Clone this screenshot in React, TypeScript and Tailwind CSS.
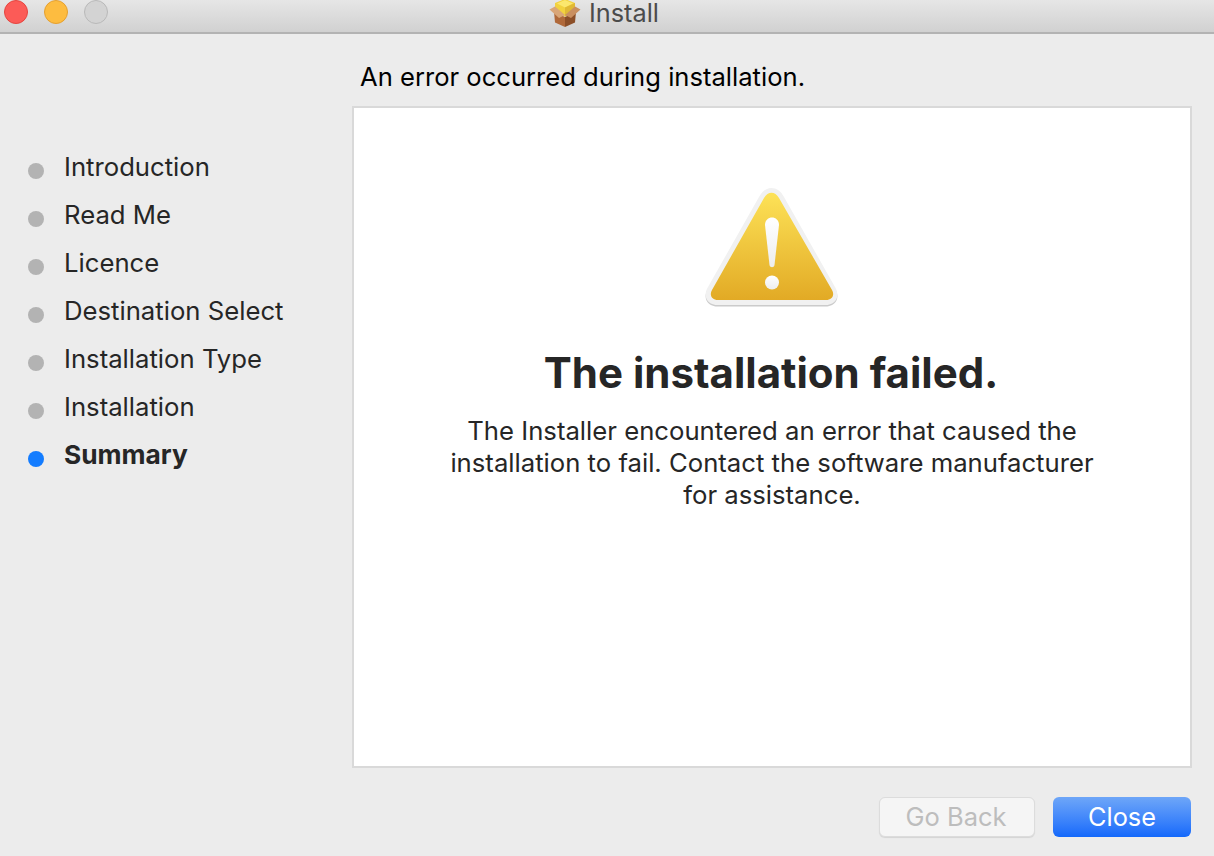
import React from "react";

const steps = ["Introduction", "Read Me", "Licence", "Destination Select", "Installation Type", "Installation", "Summary"];

function PackageIcon() {
  return (
    <svg width="32" height="27" viewBox="0 0 32 27" className="shrink-0">
      <path d="M5 12 L16 17 L16 27 L6 22.5 Z" fill="#b0693a" />
      <path d="M27 12 L16 17 L16 27 L26 22.5 Z" fill="#8c4f28" />
      <path d="M6 3 L16 -1 L26 3 L26 12 L16 16.5 L6 12 Z" fill="#f2d23f" />
      <path d="M8 3.5 L16 0 L24 3.5 L16 7.5 Z" fill="#fbe76e" />
      <path d="M16 7.5 L26 3 L26 12 L16 16.5 Z" fill="#e0b935" />
      <path d="M0.5 9.5 L6 6.5 L16 15 L10 18 Z" fill="#d9a678" />
      <path d="M31.5 9.5 L26 6.5 L16 15 L22 18 Z" fill="#c98f60" />
    </svg>
  );
}

function WarningIcon() {
  const rim = "M54 9 C60 -3 73 -3 79 9 L130 99 C136 109 130 117 120 117 L13 117 C3 117 -3 109 3 99 Z";
  return (
    <svg width="134" height="120" viewBox="0 0 134 120" className="block">
      <defs>
        <linearGradient id="warnFill" x1="0" y1="0" x2="0" y2="1">
          <stop offset="0" stopColor="#fde257" />
          <stop offset="1" stopColor="#e2aa25" />
        </linearGradient>
        <linearGradient id="warnBang" x1="0" y1="0" x2="0" y2="1">
          <stop offset="0" stopColor="#ffffff" />
          <stop offset="1" stopColor="#ededed" />
        </linearGradient>
      </defs>
      <path d={rim} fill="#a8a8a8" opacity="0.6" transform="translate(0 1.5)" />
      <path d={rim} fill="#f1f1f1" />
      <path
        d="M59 10 C63 3 70 3 74 10 L127 102 C130 107 127 112 121 112 L13 112 C7 112 4 107 7 102 Z"
        fill="url(#warnFill)"
      />
      <path
        d="M60 37 C60 27 74 27 74 37 L69.5 77 C69 80 65 80 64.5 77 Z"
        fill="url(#warnBang)"
      />
      <circle cx="67" cy="94.5" r="7" fill="url(#warnBang)" />
    </svg>
  );
}

export default function App() {
  return (
    <div className="w-[1214px] h-[856px] overflow-hidden flex flex-col bg-[#ececec] font-['Inter','Liberation_Sans',sans-serif] text-[#262626]">
      <header className="h-[34px] shrink-0 relative flex items-center justify-center border-b-2 border-[#b3b3b3] bg-gradient-to-b from-[#e6e6e6] to-[#d1d1d1]">
        <div className="absolute left-[4px] top-0 flex gap-[16px]">
          <span className="w-[24px] h-[24px] rounded-full bg-[#fc5b57] border border-[#e5453f]" />
          <span className="w-[24px] h-[24px] rounded-full bg-[#fdbc40] border border-[#e5a030]" />
          <span className="w-[24px] h-[24px] rounded-full bg-[#d3d3d3] border border-[#b9b9b9]" />
        </div>
        <div className="flex items-center gap-[8px] -mt-[5px] -ml-[6px]">
          <PackageIcon />
          <span className="text-[25.3px] leading-[25px] -mt-[3px] text-[#4b4b4b]">Install</span>
        </div>
      </header>

      <main className="flex-1 flex min-h-0">
        <nav className="w-[352px] shrink-0 pt-[109px] pl-[28px]">
          <ul className="flex flex-col">
            {steps.map((s, i) => {
              const active = i === steps.length - 1;
              return (
                <li key={s} className="h-[48px] flex items-center gap-[20px]">
                  <span className={`w-[16px] h-[16px] rounded-full mt-[7px] ${active ? "bg-[#137cff]" : "bg-[#b3b3b3]"}`} />
                  <span className={`leading-[30px] ${active ? "font-bold text-[26.3px]" : "text-[25.7px]"}`}>{s}</span>
                </li>
              );
            })}
          </ul>
        </nav>

        <section className="flex-1 pr-[22px] flex flex-col">
          <h2 className="h-[72px] pt-[26px] pl-[8px] text-[25.6px] leading-[34px] text-black font-normal">An error occurred during installation.</h2>
          <div className="h-[662px] bg-white border-2 border-[#d9d9d9] flex flex-col items-center pt-[80px]">
            <WarningIcon />
            <h1 className="mt-[37px] -ml-[2px] text-[42px] leading-[56px] font-bold text-[#262626]">The installation failed.</h1>
            <p className="mt-[14px] w-[660px] text-center text-[25.7px] leading-[32px]">
              The Installer encountered an error that caused the installation to fail. Contact the software manufacturer for assistance.
            </p>
          </div>
          <div className="flex justify-end gap-[18px] mt-[29px] pr-[1px]">
            <button className="w-[156px] h-[40px] rounded-[6px] bg-[#f5f5f5] border border-[#dcdcdc] shadow-[0_1px_1px_rgba(0,0,0,0.1)] text-[25.5px] pr-[2px] text-[#bdbdbd]">Go Back</button>
            <button className="w-[138px] h-[40px] rounded-[6px] bg-gradient-to-b from-[#6ea6f8] to-[#1268fb] text-[25.3px] text-white">Close</button>
          </div>
        </section>
      </main>
    </div>
  );
}
